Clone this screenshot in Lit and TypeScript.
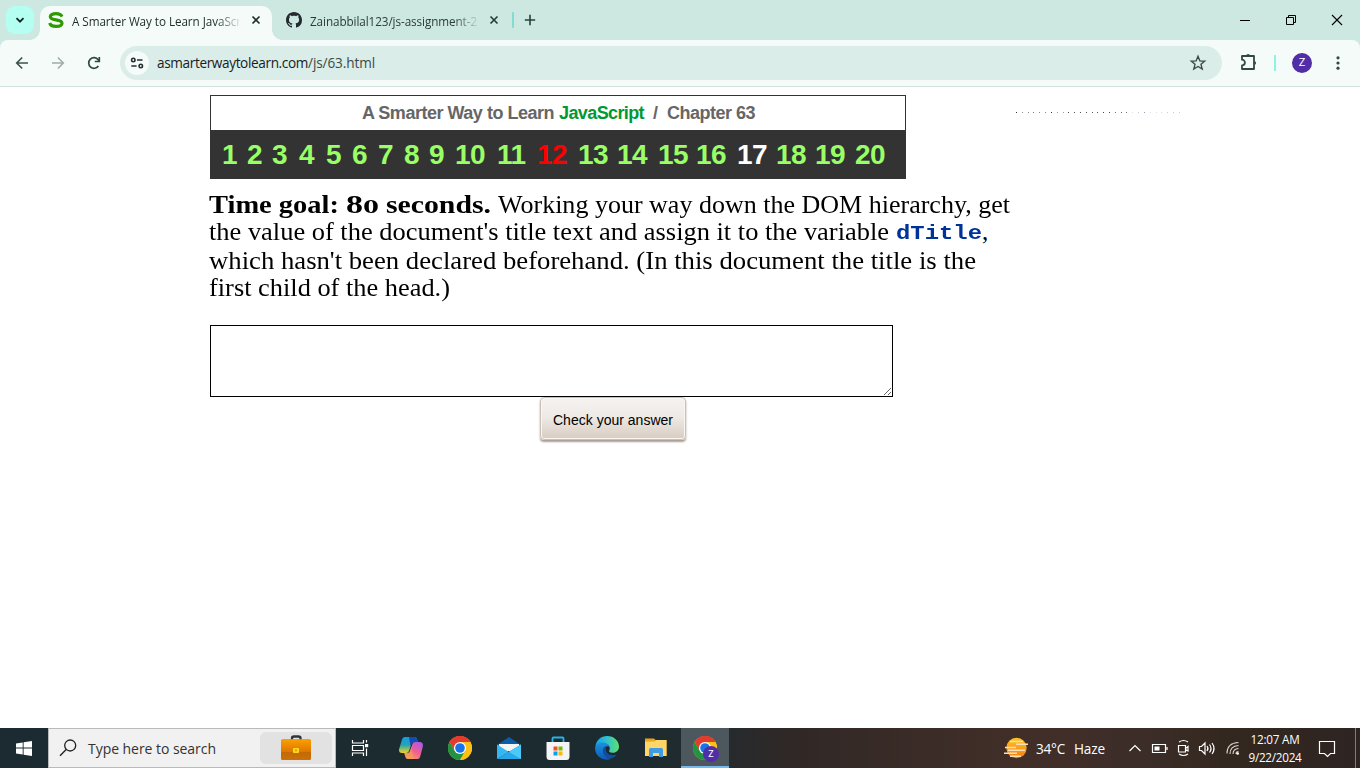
import { LitElement, html, svg, css } from "lit";
import { customElement, property } from "lit/decorators.js";

/** A run of text set to an exact width, by tracking or by widening glyphs. */
@customElement("fit-text")
class FitText extends LitElement {
  @property() text = "";
  @property({ type: Number }) w = 0;
  @property({ type: Boolean }) stretch = false;
  static styles = css`
    :host { display: inline-block; white-space: pre; text-align: left; }
    .run { display: inline-block; transform-origin: 0 50%; }
  `;
  firstUpdated() {
    const run = this.renderRoot.querySelector(".run") as HTMLElement;
    const natural = run.getBoundingClientRect().width;
    if (!natural) return;
    if (this.stretch) run.style.transform = `scaleX(${this.w / natural})`;
    else run.style.letterSpacing = `${(this.w - natural) / this.text.length}px`;
    this.style.width = `${this.w}px`;
  }
  render() {
    return html`<span class="run">${this.text}</span>`;
  }
}

const fit = (text: string, w: number) => html`<fit-text .text=${text} .w=${w}></fit-text>`;
const wide = (text: string, w: number) => html`<fit-text stretch .text=${text} .w=${w}></fit-text>`;

const icon = (w: number, h: number, body: unknown) =>
  html`<svg width=${w} height=${h} viewBox="0 0 ${w} ${h}" fill="none">${body}</svg>`;

const chromeMark = svg`
  <circle cx="12" cy="12" r="12" fill="#fbc116"/>
  <path d="M12 12L1.6 6A12 12 0 0 1 22.4 6Z" fill="#e33b2e"/>
  <path d="M12 6H22.4A12 12 0 0 0 1.6 6L6.8 15Z" fill="#e33b2e"/>
  <path d="M1.6 6A12 12 0 0 0 12 24L17.2 15L12 12L6.8 15Z" fill="#229342"/>
  <path d="M17.2 15L12 24A12 12 0 0 0 22.4 6H12Z" fill="#fbc116"/>
  <circle cx="12" cy="12" r="6.1" fill="#fff"/><circle cx="12" cy="12" r="4.8" fill="#1a73e8"/>`;

const octocat = svg`<path fill="#24292f" d="M8 0C3.58 0 0 3.58 0 8c0 3.54 2.29 6.53 5.47 7.59.4.07.55-.17.55-.38 0-.19-.01-.82-.01-1.49-2.01.37-2.53-.49-2.69-.94-.09-.23-.48-.94-.82-1.13-.28-.15-.68-.52-.01-.53.63-.01 1.08.58 1.23.82.72 1.21 1.87.87 2.33.66.07-.52.28-.87.51-1.07-1.78-.2-3.64-.89-3.64-3.95 0-.87.31-1.59.82-2.15-.08-.2-.36-1.02.08-2.12 0 0 .67-.21 2.2.82.64-.18 1.32-.27 2-.27s1.36.09 2 .27c1.53-1.04 2.2-.82 2.2-.82.44 1.1.16 1.92.08 2.12.51.56.82 1.27.82 2.15 0 3.07-1.87 3.75-3.65 3.95.29.25.54.73.54 1.48 0 1.07-.01 1.93-.01 2.2 0 .21.15.46.55.38A8.01 8.01 0 0 0 16 8c0-4.42-3.58-8-8-8z"/>`;

const sMark = svg`<path d="M14 4.6C13 2.3 10.8 1.7 8 1.7C4.700 1.700 2.300 2.700 2.300 4.700C2.300 6.700 4.500 7.200 8 7.800C11.800 8.400 14 9.100 14 11.200C14 13.400 11.400 14.400 8 14.400C4.700 14.400 2.400 13.500 1.700 11" stroke="#2e9a00" stroke-width="3.200"/>`;

const cross = (c: string) => icon(10, 10, svg`<path d="M1.500 1.500L8.500 8.500M8.500 1.500L1.500 8.500" stroke=${c} stroke-width="1.700"/>`);

// Question number and the width of its cell.
const questions: [number, number][] = [
  [1, 25], [2, 25], [3, 27], [4, 27], [5, 26], [6, 26], [7, 26], [8, 25], [9, 26], [10, 42],
  [11, 40], [12, 41], [13, 39], [14, 41], [15, 38], [16, 41], [17, 39], [18, 39], [19, 40], [20, 34],
];

const dots = [
  "#333", "#888", "#888", "#777", "#888", "#888", "#333", "#999", "#999", "#444", "#555", "#555", "#555", "#555",
  "#555", "#444", "#444", "#777", "#666", "#777", "#ddd", "#ccc", "#99b", "#ddd", "#ddd", "#ddd", "#ccc", "#ccc", "#ccc",
];

@customElement("browser-top")
class BrowserTop extends LitElement {
  static styles = css`
    :host { display: block; height: 87px; background: #cce8e1; font-family: "Open Sans", sans-serif; }
    svg { display: block; flex: none; overflow: visible; }
    .strip { display: flex; height: 40px; }
    .search { display: grid; place-items: center; width: 28px; height: 28px; margin: 6px 6px 0; border-radius: 9px; background: #b4fff2; }
    .tab { display: flex; align-items: center; box-sizing: border-box; width: 232px; height: 34px; margin-top: 6px; padding: 0 11px 6px 8px; border-radius: 10px 10px 0 0; font-size: 11.7px; color: #2b3b38; }
    .active { position: relative; background: #f5fbf9; color: #1d2b28; }
    .active::before, .active::after { content: ""; position: absolute; bottom: 0; width: 10px; height: 10px; }
    .active::before { left: -10px; background: radial-gradient(circle at 0 0, transparent 9.5px, #f5fbf9 10px); }
    .active::after { right: -10px; background: radial-gradient(circle at 100% 0, transparent 9.5px, #f5fbf9 10px); }
    .second { margin-left: 6px; }
    .title { width: 167px; overflow: hidden; margin: 0 auto 0 8px; padding-top: 1px; line-height: 18px; mask-image: linear-gradient(90deg, #000 86%, rgba(0, 0, 0, 0.12)); }
    .sep { width: 2px; height: 16px; margin: 12px 10px 0 2px; background: #82dcd1; border-radius: 1px; }
    .plus { margin-top: 14px; }
    .win { display: flex; margin-left: auto; }
    .win div { display: grid; place-items: center; width: 46px; height: 40px; }
    .bar { display: flex; align-items: center; box-sizing: border-box; height: 47px; border-bottom: 1px solid #d3e1dd; border-radius: 8px 8px 0 0; background: #f5fbf9; padding-left: 14px; }
    .nav { display: flex; gap: 20px; }
    .omni { display: flex; flex: none; align-items: center; width: 1102px; height: 34px; margin-left: 18px; border-radius: 17px; background: #daede8; font-size: 13.6px; color: #3a4a47; }
    .site { display: grid; place-items: center; width: 24px; height: 24px; margin: 0 8px 0 5px; border-radius: 50%; background: #f5fbf9; }
    .host { color: #16211f; }
    .url { display: flex; line-height: 20px; }
    .star { margin-left: auto; margin-right: 16px; }
    .puzzle { margin-left: 17px; }
    .rule { flex: none; width: 2px; height: 16px; margin: 0 16px 0 15px; background: #8df3e5; }
    .avatar { display: grid; flex: none; place-items: center; width: 20px; height: 20px; border-radius: 50%; background: #512da8; color: #fff; font: 11px/20px Roboto, sans-serif; }
    .more { margin-left: 20px; }
  `;
  render() {
    return html`
      <div class="strip">
        <div class="search">${icon(10, 10, svg`<path d="M1.500 3.200L5 6.700L8.500 3.200" stroke="#12231f" stroke-width="1.800"/>`)}</div>
        <div class="tab active">${icon(16, 16, sMark)}<div class="title">${fit("A Smarter Way to Learn JavaScr", 169)}</div>${cross("#22302d")}</div>
        <div class="tab second">${icon(16, 16, octocat)}<div class="title">${fit("Zainabbilal123/js-assignment-2", 167)}</div>${cross("#22403b")}</div>
        <div class="sep"></div>
        <div class="plus">${icon(12, 12, svg`<path d="M6 .8V11.200M.8 6H11.200" stroke="#23433c" stroke-width="1.600"/>`)}</div>
        <div class="win">
          <div>${icon(10, 10, svg`<path d="M0 5.500H10" stroke="#000"/>`)}</div>
          <div>${icon(10, 10, svg`<path d="M.5 2.500H7.500V9.500H.5ZM2.500 2.500V.5H9.500V7.500H7.500" stroke="#000"/>`)}</div>
          <div>${icon(10, 10, svg`<path d="M0 0L10 10M10 0L0 10" stroke="#000" stroke-width="1.100"/>`)}</div>
        </div>
      </div>
      <div class="bar">
        <div class="nav">
          ${icon(16, 16, svg`<path d="M8.200 2.500L2.700 8L8.200 13.500M3 8H14" stroke="#3d514d" stroke-width="1.600"/>`)}
          ${icon(16, 16, svg`<path d="M7.800 2.500L13.300 8L7.800 13.500M13 8H2" stroke="#a0acaa" stroke-width="1.600"/>`)}
          ${icon(16, 16, svg`<path d="M12.400 11A5.300 5.300 0 1 1 12.200 4.700L13.300 6.300" stroke="#2f4843" stroke-width="1.700"/><path d="M13.300 2V6.500H8.800" stroke="#2f4843" stroke-width="1.700"/>`)}
        </div>
        <div class="omni">
          <div class="site">${icon(14, 14, svg`<g stroke="#23312e" stroke-width="1.600"><circle cx="3.300" cy="4" r="1.700"/><path d="M7 4H12.500M1.300 10H6.600"/><circle cx="10.800" cy="10" r="1.700"/></g>`)}</div>
          <div class="url"><span class="host">${fit("asmarterwaytolearn.com", 151)}</span>${fit("/js/63.html", 67)}</div>
          <div class="star">${icon(16, 16, svg`<path d="M8 1.300L9.900 5.900L14.700 6.200L11 9.300L12.200 14.100L8 11.500L3.800 14.100L5 9.300L1.300 6.200L6.100 5.900Z" stroke="#3a4a47" stroke-width="1.400"/>`)}</div>
        </div>
        <div class="puzzle">${icon(20, 20, svg`<path d="M3 3H15V16H3V12.500A2.900 2.900 0 0 0 3 6.700Z" stroke="#2f4843" stroke-width="1.800" stroke-linejoin="round"/><path d="M7 2.600A2.200 2.200 0 0 1 11.200 2.600ZM15.500 7.900A2.200 2.200 0 0 1 15.500 12.100Z" fill="#2f4843"/>`)}</div>
        <div class="rule"></div>
        <div class="avatar">Z</div>
        <div class="more">${icon(16, 16, svg`<g fill="#2f4843"><circle cx="6" cy="2.800" r="1.600"/><circle cx="6" cy="8" r="1.600"/><circle cx="6" cy="13.200" r="1.600"/></g>`)}</div>
      </div>
    `;
  }
}

@customElement("lesson-page")
class LessonPage extends LitElement {
  static styles = css`
    :host { display: flex; height: 641px; background: #fff; font-family: "Liberation Sans", sans-serif; }
    .main { width: 806px; padding: 8px 0 0 210px; }
    .head { width: 694px; border: 1px solid #333; }
    .name { display: flex; height: 34px; padding-left: 151px; font-weight: bold; font-size: 18px; line-height: 34px; color: #666; }
    .js { color: #093; }
    .slash { margin: 0 9px; }
    .nums { display: flex; box-sizing: border-box; height: 48px; padding: 1px 0 0 11px; background: #333; color: #9f6; font-weight: bold; font-size: 28px; line-height: 48px; letter-spacing: -0.6px; }
    .wrong { color: #f00; }
    .now { color: #fff; }
    .task { margin: 12px 0 0 -1px; font: 25px/27px "Liberation Serif", serif; color: #000; }
    .line { display: flex; height: 27px; }
    .tall { height: 29px; }
    .goal { display: flex; align-items: baseline; margin-right: 7px; font-weight: bold; }
    .figures { display: flex; align-items: baseline; margin: 0 7px; }
    .low { font-size: 18.5px; }
    .code { font: bold 21px/31px "Liberation Mono", monospace; color: #039; margin-left: 7px; }
    .box { display: block; box-sizing: border-box; width: 683px; height: 72px; margin-top: 24px; border: 1px solid #000; border-radius: 0; resize: both; outline: none; background: #fff; }
    .check { display: block; box-sizing: border-box; width: 146px; height: 43px; margin: 0 0 0 330px; padding: 1px 0 0; border: 1px solid #c9c1b9; border-radius: 4px; background: linear-gradient(#f5f2f0, #eeeae6 45%, #d8ccc1); box-shadow: inset 0 0 0 1px #f9f6f3, 0 2px 2px #a99c90; font: 14px/42px "Liberation Sans", sans-serif; color: #000; text-align: center; }
    .dots { display: flex; justify-content: space-between; width: 164px; height: 1px; margin-top: 25px; }
    .dots i { width: 1px; height: 1px; }
  `;
  render() {
    return html`
      <div class="main">
        <div class="head">
          <div class="name">
            ${fit("A Smarter Way to Learn", 192)}<span>&nbsp;</span><span class="js">${fit("JavaScript", 85)}</span>
            <span class="slash">/</span>${fit("Chapter 63", 88)}
          </div>
          <div class="nums">
            ${questions.map(([n, w]) => html`<span class=${n === 12 ? "wrong" : n === 17 ? "now" : ""} style="width:${w}px">${n}</span>`)}
          </div>
        </div>
        <div class="task">
          <div class="line">
            <span class="goal">${wide("Time goal:", 130)}<span class="figures">${wide("8", 17)}<span class="low">${wide("0", 16)}</span></span>${wide("seconds.", 105)}</span>
            ${wide("Working your way down the DOM hierarchy, get", 512)}
          </div>
          <div class="line tall">${wide("the value of the document's title text and assign it to the variable", 680)}<span class="code">${wide("dTitle", 86)}</span><span>,</span></div>
          <div class="line">${wide("which hasn't been declared beforehand. (In this document the title is the", 767)}</div>
          <div class="line">${wide("first child of the head.)", 241)}</div>
        </div>
        <textarea class="box"></textarea>
        <button class="check">${fit("Check your answer", 120)}</button>
      </div>
      <div class="dots">${dots.map((c) => html`<i style="background:${c}"></i>`)}</div>
    `;
  }
}

@customElement("task-bar")
class TaskBar extends LitElement {
  static styles = css`
    :host { display: flex; height: 40px; background: linear-gradient(90deg, #1b2b31 0, #1d2b30 48%, #252b2e 53%, #302826 58%, #3b2c27 68%, #422e28 76%, #3c2d28 84%, #33281f 90%, #2e2422 100%); font-family: "Open Sans", sans-serif; color: #fff; }
    svg { display: block; flex: none; }
    .find { display: flex; align-items: center; box-sizing: border-box; width: 288px; border: 1px solid #b9b9b9; background: #f1f1f1; color: #333; font-size: 14px; }
    .hint { margin-left: 3px; padding-top: 2px; line-height: 24px; }
    .case { display: grid; place-items: center; width: 72px; height: 32px; margin: 0 3px 0 auto; border-radius: 6px; background: #e2e2e2; }
    .apps { display: flex; }
    .app { display: grid; place-items: center; width: 49px; height: 40px; }
    .view { width: 48px; margin-right: 2px; }
    .on { width: 48px; box-sizing: border-box; margin-left: 1px; background: #4c585e; border-bottom: 2px solid #76b9ed; padding-top: 2px; }
    .mark { position: relative; width: 24px; height: 24px; }
    .badge { position: absolute; left: 10px; top: 10px; width: 16px; height: 16px; border-radius: 50%; background: #512da8; font: 9px/16px Roboto, sans-serif; text-align: center; }
    .tray { display: flex; align-items: center; margin-left: auto; font-size: 13.6px; }
    .tray .deg { margin: 0 9px 0 8px; }
    .clock { display: flex; flex-direction: column; align-items: center; width: 54px; margin: 0 13px 0 0; font-size: 11.7px; line-height: 18px; }
    .glyphs { margin-left: 16px; }
    .edge { width: 1px; height: 40px; margin: 0 4px 0 16px; background: #857c79; }
  `;
  render() {
    return html`
      ${icon(48, 40, svg`<path d="M16 15.400L22.700 14.400V19.500H16ZM23.600 14.300L32 13V19.500H23.600ZM16 20.500H22.700V26.600L16 25.600ZM23.600 20.500H32V28L23.600 26.800Z" fill="#fff"/>`)}
      <div class="find">
        ${icon(36, 38, svg`<circle cx="21.200" cy="16.500" r="5.500" stroke="#222" stroke-width="1.300"/><path d="M17.200 20.500L11 26.800" stroke="#222" stroke-width="1.400"/>`)}
        <div class="hint">${fit("Type here to search", 128)}</div>
        <div class="case">${icon(30, 26, svg`
          <defs><linearGradient id="lid" x1="0" y1="0" x2="0" y2="1"><stop stop-color="#f8a000"/><stop offset="1" stop-color="#df7500"/></linearGradient>
          <linearGradient id="body" x1="0" y1="0" x2="0" y2="1"><stop stop-color="#b95c00"/><stop offset="1" stop-color="#c97109"/></linearGradient></defs>
          <path d="M11 4.500V3.200Q11 1.500 13 1.500H17.500Q19.500 1.500 19.500 3.200V4.500" stroke="#30333a" stroke-width="2.300"/>
          <rect y="4.500" width="30" height="20.500" rx="1.500" fill="url(#body)"/>
          <rect y="4.500" width="30" height="12.500" rx="1.200" fill="url(#lid)"/>
          <rect x="12" y="13" width="6" height="5" rx=".8" fill="#ffd817"/><circle cx="15" cy="15.500" r="1" fill="#d99500"/>`)}</div>
      </div>
      <div class="apps">
        <div class="app view">${icon(18, 18, svg`<path d="M1.500 1V4H12.500V1M1.500 17V14H12.500V17M1.500 6.500H12.500V11.500H1.500ZM15.500 1V3.500M15.500 9.500V17" stroke="#fff" stroke-width="1.200"/><rect x="14" y="5" width="3.200" height="3.200" fill="#fff"/>`)}</div>
        <div class="app">${icon(24, 24, svg`
          <defs><linearGradient id="cpa" x1="0" y1="0" x2="0" y2="1"><stop stop-color="#169be8"/><stop offset=".5" stop-color="#24a4b0"/><stop offset="1" stop-color="#f2d424"/></linearGradient>
          <linearGradient id="cpb" x1=".8" y1="0" x2=".2" y2="1"><stop stop-color="#ad59e6"/><stop offset=".5" stop-color="#ef5f8e"/><stop offset="1" stop-color="#ffa067"/></linearGradient></defs>
          <path d="M5.500 1H15.500Q17.300 1 18 3L18.800 6H15Q13 6 12.400 8L10 15Q9.200 17 7 17H3Q-1 17 .3 12.500L3 3.500Q3.700 1 5.500 1Z" fill="url(#cpa)"/>
          <path d="M10 1H15.500Q17.300 1 18 3L18.800 6H15Q13 6 12.400 8L11.500 10Z" fill="#1749b8"/>
          <path d="M18.500 23H9Q7 23 6.300 20.500L5.300 17H8.500Q10.300 17 11 15L13.400 8Q14 6 16.500 6H20.500Q25 6 23.600 11.500L21.200 20.500Q20.500 23 18.500 23Z" fill="url(#cpb)"/>
          <path d="M5.300 17H8.500Q10.300 17 11 15L12.500 10.500L14.500 23H9Q7 23 6.300 20.500Z" fill="#f4a34d" opacity=".55"/>`)}</div>
        <div class="app">${icon(24, 24, chromeMark)}</div>
        <div class="app">${icon(24, 24, svg`<path d="M0 9L12 1L24 9V12H0Z" fill="#0f5ba6"/><path d="M2 8H22V15H2Z" fill="#f4f4f4"/><path d="M0 8.500L12 16L0 23Z" fill="#35b8f1"/><path d="M24 8.500L12 16L24 23Z" fill="#50d3fb"/><path d="M0 23L24 8.500V23Z" fill="#28a8ea"/><path d="M12 16L24 8.500V23Z" fill="#4bcafa"/>`)}</div>
        <div class="app">${icon(24, 24, svg`<path d="M6.500 7V2.500Q6.500 1.500 7.500 1.500H16.500Q17.500 1.500 17.500 2.500V7" stroke="#25b6e8" stroke-width="1.800"/><path d="M.5 6H23.500V20.500Q23.500 24 20.500 24H3.500Q.5 24 .5 20.500Z" fill="#f4f4f4"/><path d="M7.500 10.500H11.500V14.500H7.500Z" fill="#f25022"/><path d="M12.500 10.500H16.500V14.500H12.500Z" fill="#7fba00"/><path d="M7.500 15.500H11.500V19.500H7.500Z" fill="#00a4ef"/><path d="M12.500 15.500H16.500V19.500H12.500Z" fill="#ffb900"/>`)}</div>
        <div class="app">${icon(24, 24, svg`
          <defs><linearGradient id="eda" x1="0" y1=".4" x2="1" y2=".4"><stop stop-color="#1b9de2"/><stop offset=".5" stop-color="#2fc3cf"/><stop offset="1" stop-color="#5fe06a"/></linearGradient>
          <linearGradient id="edb" x1="0" y1="0" x2="0" y2="1"><stop stop-color="#1c93df"/><stop offset="1" stop-color="#0b58b8"/></linearGradient></defs>
          <path d="M.3 10.500C1.500 4 6 0 12 0C19 0 24 5 24 10.500C24 14.500 21 16.800 17.500 16.800C14.500 16.800 13.500 15.500 14.300 14.200C16 11.500 13.500 7.500 8.500 7.500C4.500 7.500 1.500 9 .3 10.500Z" fill="url(#eda)"/>
          <path d="M.2 11C1.500 7.500 5 6 8.500 6.500C12 7 14 8.500 14.500 10.500C9.500 9 7 13 8.500 17C9.700 20.200 12.500 22.500 16 23C9 26 -1 20.500 .2 11Z" fill="url(#edb)"/>
          <path d="M9.500 11C7.500 13 7.800 17.500 10.500 20.300C13.500 23.200 18 23.500 22 18.500C18 20.200 13.300 19 11.500 16C10.500 14.300 10.500 12.500 11.500 10.500Z" fill="#124f9e"/>`)}</div>
        <div class="app">${icon(24, 24, svg`<path d="M1 2.500H10L11.500 4H22.500V20H1Z" fill="#eba51a"/><path d="M1 5.500H10.500L12 4H22.500V20H1Z" fill="#ffd667"/><path d="M5 21V13.500Q5 12 6.500 12H17.500Q19 12 19 13.500V21H15V17H9V21Z" fill="#3f9be3"/>`)}</div>
        <div class="app on"><div class="mark">${icon(24, 24, chromeMark)}<div class="badge">Z</div></div></div>
      </div>
      <div class="tray">
        ${icon(24, 24, svg`
          <defs><linearGradient id="sun" x1="0" y1="0" x2="0" y2="1"><stop stop-color="#ffc51f"/><stop offset="1" stop-color="#f77a12"/></linearGradient></defs>
          <circle cx="12.500" cy="12" r="10.200" fill="url(#sun)"/><path d="M6 5.500H19M12 8.300H24M1 11.500H12M4 14.300H21M0 17.300H13M6 20.300H17" stroke="#f7dfb7" stroke-width="1.500"/>`)}
        <span class="deg">${fit("34°C", 29)}</span><span>${fit("Haze", 31)}</span>
        <div class="glyphs">${icon(127, 40, svg`<g stroke="#fff" stroke-width="1.200">
          <path d="M8.500 23L14 17.500L19.500 23"/>
          <path d="M31.500 16.500H44.500V24.500H31.500ZM46 19V22"/><rect x="33.500" y="18.500" width="5" height="4" fill="#fff" stroke="none"/>
          <path d="M57.500 17.500H64.500V24H57.500ZM64.500 20.500L67 18.500V23L64.500 21.500M58 14Q62.500 11 67 14M58 26Q62.500 29 67 26"/>
          <path d="M78.500 18.500H80.500L84 15V26L80.500 22.500H78.500ZM86 18Q88 20.500 86 23M88.500 16.500Q91.500 20.500 88.500 24.500M91 15Q95 20.500 91 26"/></g>
          <g stroke="#d8d3d1" stroke-width="1.100"><path d="M106 25.500Q106 15 117.500 14.500M109 26Q109 18 117.500 17.500M112 26Q112 21 117.500 20.500M115 26Q115 23.500 117.500 23.500"/></g><circle cx="116.700" cy="25.500" r="1.300" fill="#fff"/>`)}</div>
        <div class="clock">${fit("12:07 AM", 49)}${fit("9/22/2024", 53)}</div>
        ${icon(24, 24, svg`<path d="M4.500 5.500H19.500V17.500H15.500L12.500 20.500L9.500 17.500H4.500Z" stroke="#fff" stroke-width="1.200"/>`)}
        <div class="edge"></div>
      </div>
    `;
  }
}

@customElement("app-root")
class AppRoot extends LitElement {
  static styles = css`
    :host { display: flex; flex-direction: column; width: 1360px; height: 768px; overflow: hidden; background: #fff; }
  `;
  render() {
    return html`<browser-top></browser-top><lesson-page></lesson-page><task-bar></task-bar>`;
  }
}
